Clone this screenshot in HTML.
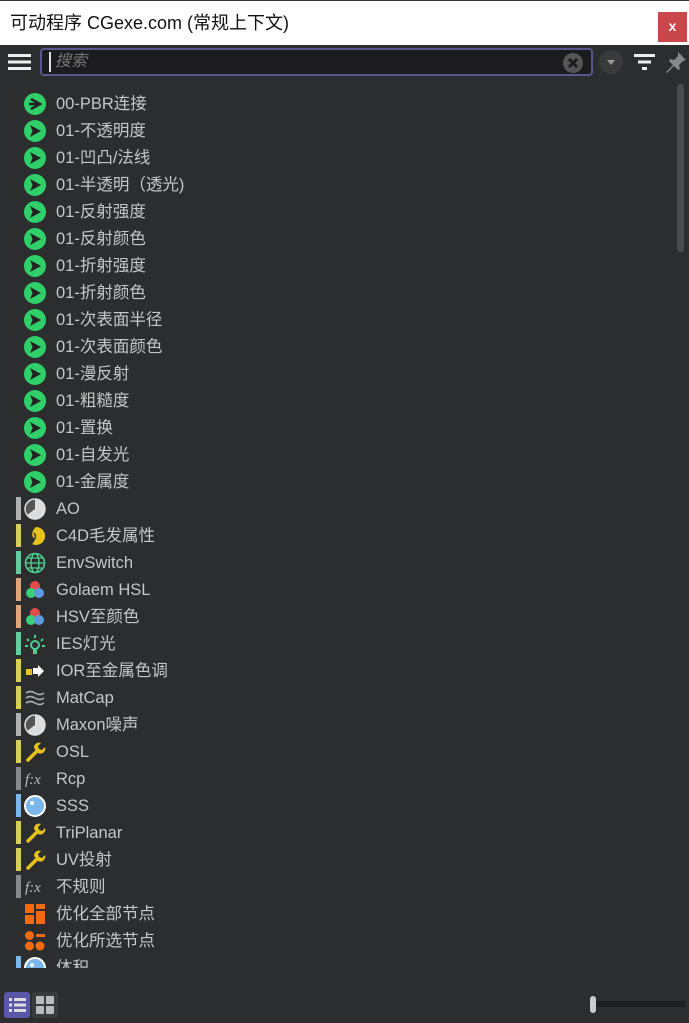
<!DOCTYPE html><html><head><meta charset="utf-8"><style>
*{margin:0;padding:0;box-sizing:border-box}
body{width:689px;height:1023px;background:#2c2d2f;font-family:"Liberation Sans","Noto Sans CJK SC",sans-serif;position:relative;overflow:hidden}
.title{position:absolute;left:0;top:0;width:689px;height:45px;background:#fff;border-top:1px solid #333}
.title span{position:absolute;left:10px;top:11px;font-size:18px;line-height:22px;color:#111}
.close{position:absolute;left:658px;top:11px;width:29px;height:30px;background:#c9474b;color:#fff;font-size:14px;text-align:center;line-height:29px;font-weight:bold}
.search{position:absolute;left:40px;top:48px;width:553px;height:28px;background:#1c1c1e;border:2px solid #5b5590;border-radius:4px}
.search .cur{position:absolute;left:7px;top:2px;width:2px;height:20px;background:#ddd}
.search .ph{position:absolute;left:13px;top:1px;font-size:16px;line-height:22px;color:#777;font-style:italic}
.row{position:absolute;left:0;height:27px;width:660px}
.bar{position:absolute;left:16px;top:2px;width:5px;height:23px}
.ic{position:absolute;left:24px;top:3px;width:22px;height:22px}
.tx{position:absolute;left:56px;top:2px;font-size:16.5px;line-height:24px;height:24px;color:#c6c6c6;white-space:nowrap}
</style></head><body>
<div class="title"><span>可动程序 CGexe.com (常规上下文)</span><div class="close">x</div></div>
<svg style="position:absolute;left:8px;top:53px" width="24" height="18"><rect y="1" width="23" height="3" fill="#eee"/><rect y="7.5" width="23" height="3" fill="#eee"/><rect y="14" width="23" height="3" fill="#eee"/></svg>
<div class="search"><div class="cur"></div><div class="ph">搜索</div>
<svg style="position:absolute;left:520px;top:2px" width="22" height="22"><circle cx="11" cy="11" r="10" fill="#555"/><path d="M7 7L15 15M15 7L7 15" stroke="#1c1c1e" stroke-width="3"/></svg></div>
<svg style="position:absolute;left:598px;top:49px" width="26" height="26"><circle cx="13" cy="13" r="12" fill="#3a3a3c"/><path d="M9 11h8l-4 5z" fill="#999"/></svg>
<svg style="position:absolute;left:634px;top:53px" width="22" height="18"><rect x="0" y="1" width="21" height="3" fill="#eee"/><rect x="4" y="7.5" width="13" height="3" fill="#eee"/><rect x="8" y="14" width="5" height="3" fill="#eee"/></svg>
<svg style="position:absolute;left:664px;top:50px" width="24" height="24"><path d="M14 2l8 8-3 1-4 4 1 4-2 1-4-4-7 7-1-1 7-7-4-4 1-2 4 1 4-4z" fill="#888"/></svg>
<div style="position:absolute;left:677px;top:84px;width:7px;height:168px;background:#4a4b4d;border-radius:3px"></div>
<div id="list" style="position:absolute;left:0;top:90px;width:670px;height:878px;overflow:hidden">
<script>
var g='<circle cx="11" cy="11" r="11" fill="#2fd06a"/><path d="M6 5L17 11L6 17L8.5 11z" fill="#222"/>';
var g0='<circle cx="11" cy="11" r="11" fill="#2fd06a"/><path d="M5 11h12M7 6L16 11L7 16" stroke="#222" stroke-width="2.5" fill="none"/>';
var grey='<circle cx="11" cy="11" r="10" fill="#ddd"/><path d="M11 11L11 1A10 10 0 0 0 3 17z" fill="#555"/><circle cx="11" cy="11" r="10" fill="none" stroke="#ddd" stroke-width="1.5"/>';
var wr='<path d="M4 19L12 11" stroke="#e6c21a" stroke-width="3.5" stroke-linecap="round"/><path d="M10 7a5 5 0 0 1 7-5l-3 3 1 3 3 1 3-3a5 5 0 0 1-7 6z" fill="#e6c21a"/>';
var fx='<text x="1" y="16" font-family="Liberation Serif" font-style="italic" font-size="15" fill="#bbb">f:x</text>';
var sss='<circle cx="11" cy="11" r="10" fill="#7ab8ec" stroke="#fff" stroke-width="2"/><circle cx="8" cy="8" r="2" fill="#fff"/>';
var rgb='<circle cx="11" cy="7" r="5" fill="#e34a4a"/><circle cx="7" cy="14" r="5" fill="#3ad07a"/><circle cx="15" cy="14" r="5" fill="#5a9be0"/>';
var items=[["00-PBR连接",g0,""]];
["01-不透明度","01-凹凸/法线","01-半透明（透光)","01-反射强度","01-反射颜色","01-折射强度","01-折射颜色","01-次表面半径","01-次表面颜色","01-漫反射","01-粗糙度","01-置换","01-自发光","01-金属度"].forEach(function(t){items.push([t,g,""])});
items=items.concat([
["AO",grey,"#b0b0b0"],
["C4D毛发属性",'<path d="M12 2a9 9 0 1 1-4 17c3-2 3-5 1-7s0-8 3-10z" fill="#e6c21a"/><path d="M10 8q3 3 0 7" stroke="#333" stroke-width="1.5" fill="none"/>',"#d8cf5a"],
["EnvSwitch",'<circle cx="11" cy="11" r="9.5" fill="none" stroke="#4fd08f" stroke-width="1.6"/><ellipse cx="11" cy="11" rx="4" ry="9.5" fill="none" stroke="#4fd08f" stroke-width="1.4"/><path d="M2 11h18M4 6h14M4 16h14" stroke="#4fd08f" stroke-width="1.3"/>',"#6bc9a0"],
["Golaem HSL",rgb,"#e0a77a"],
["HSV至颜色",rgb,"#e0a77a"],
["IES灯光",'<circle cx="11" cy="12" r="4" fill="none" stroke="#4fd08f" stroke-width="2"/><path d="M10 16h2v4h-2zM11 2v3M3 6l2 2M19 6l-2 2M1 13h3M18 13h3" stroke="#4fd08f" stroke-width="2"/>',"#6bc9a0"],
["IOR至金属色调",'<path d="M2 9h6v6H2z" fill="#e6c21a"/><path d="M9 8h5V5l6 6-6 6v-3H9z" fill="#fff"/>',"#d8cf5a"],
["MatCap",'<path d="M2 6q4-3 9 0t9 0M2 11q4-3 9 0t9 0M2 16q4-3 9 0t9 0" stroke="#aaa" stroke-width="1.6" fill="none"/>',"#d8cf5a"],
["Maxon噪声",grey,"#b0b0b0"],
["OSL",wr,"#d8cf5a"],
["Rcp",fx,"#8a8a8a"],
["SSS",sss,"#7ab8ec"],
["TriPlanar",wr,"#d8cf5a"],
["UV投射",wr,"#d8cf5a"],
["不规则",fx,"#8a8a8a"],
["优化全部节点",'<path d="M1 1h9v9H1zM12 1h9v5h-9zM12 8h9v13h-9zM1 12h9v9H1z" fill="#f36b10"/>',""],
["优化所选节点",'<circle cx="5.5" cy="5.5" r="4.5" fill="#f36b10"/><rect x="12" y="4" width="9" height="3" fill="#f36b10"/><circle cx="5.5" cy="16" r="4.5" fill="#f36b10"/><circle cx="16" cy="16" r="4.5" fill="#f36b10"/>',""],
["体积",sss,"#7ab8ec"]]);
var h='';items.forEach(function(it,i){h+='<div class="row" style="top:'+(i*27)+'px">'+(it[2]?'<div class="bar" style="background:'+it[2]+'"></div>':'')+'<svg class="ic" viewBox="0 0 22 22">'+it[1]+'</svg><div class="tx">'+it[0]+'</div></div>'});
document.write(h);
</script></div>
<div style="position:absolute;left:4px;top:992px;width:26px;height:26px;background:#5a56a8;border-radius:3px"></div>
<svg style="position:absolute;left:9px;top:997px" width="18" height="16"><g fill="#ddd"><rect x="0" y="1" width="3" height="3"/><rect x="5" y="1" width="12" height="3"/><rect x="0" y="6.5" width="3" height="3"/><rect x="5" y="6.5" width="12" height="3"/><rect x="0" y="12" width="3" height="3"/><rect x="5" y="12" width="12" height="3"/></g></svg>
<div style="position:absolute;left:32px;top:992px;width:26px;height:26px;background:#3a3b3d;border-radius:3px"></div>
<svg style="position:absolute;left:36px;top:996px" width="18" height="18"><g fill="#bbb"><rect x="0" y="0" width="8" height="8" rx="1"/><rect x="10" y="0" width="8" height="8" rx="1"/><rect x="0" y="10" width="8" height="8" rx="1"/><rect x="10" y="10" width="8" height="8" rx="1"/></g></svg>
<div style="position:absolute;left:594px;top:1001px;width:91px;height:6px;background:#1e1f20"></div>
<div style="position:absolute;left:590px;top:996px;width:6px;height:17px;background:#ccc;border-radius:3px"></div>
</body></html>
